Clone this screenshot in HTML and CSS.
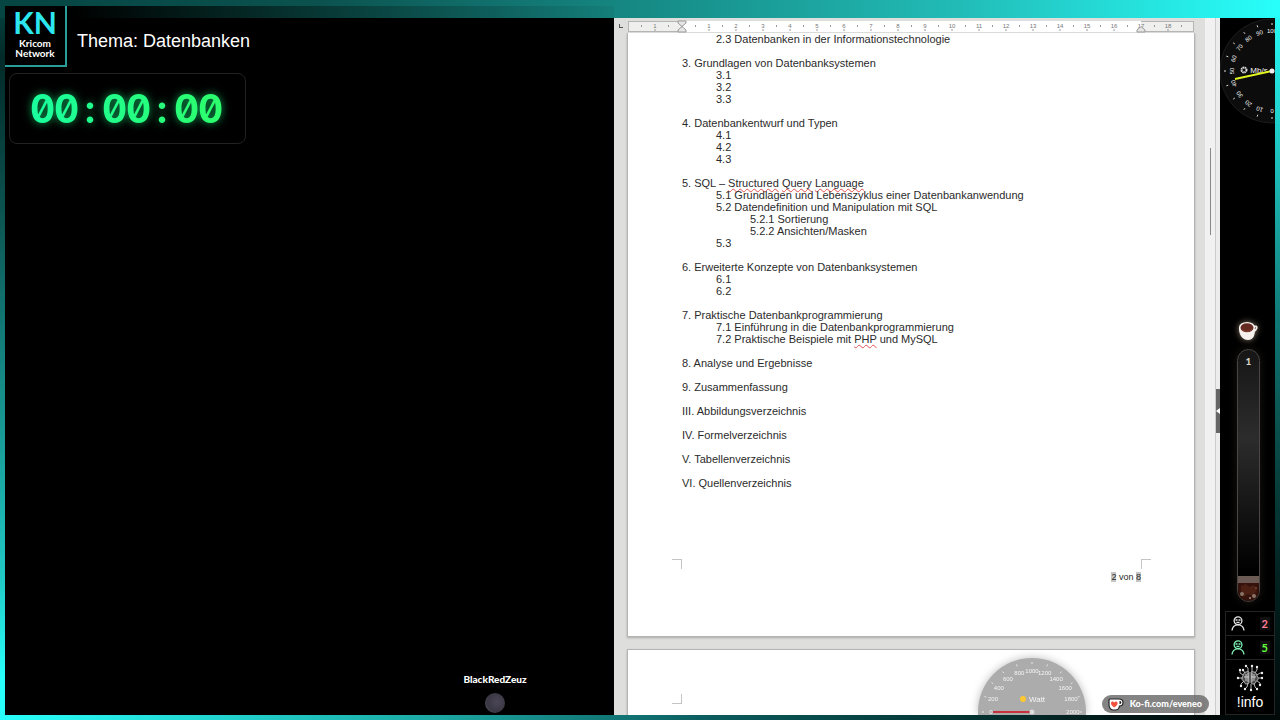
FILE: index.html
```
<!DOCTYPE html>
<html lang="de">
<head>
    <meta charset="UTF-8">
    <meta name="viewport" content="width=device-width, initial-scale=1.0">
    <title>Kricom Network - Datenbanken</title>
    <link rel="stylesheet" href="styles.css">
</head>
<body>

<div class="stage">
    <main class="camera">
        <header class="title-bar">
            <div class="logo">
                <span class="logo-short">KN</span>
                <span class="logo-name">Kricom<br>Network</span>
            </div>
            <h1>Thema: Datenbanken</h1>
        </header>
        <div class="timer">
            <div class="digits">
                <span>0</span><span>0</span><span>:</span><span>0</span><span>0</span><span>:</span><span>0</span><span>0</span>
            </div>
        </div>
        <div class="speaker">
            <span>BlackRedZeuz</span>
            <div class="avatar"></div>
        </div>
    </main>

    <section class="writer">
        <div class="desk">
            <div class="ruler">
                <span class="tab-stop"></span>
                <svg id="ruler" width="568" height="13" viewBox="0 0 568 13"></svg>
            </div>
            <article class="page">
                <ul class="toc">
                    <li>
                        <ul>
                            <li>2.3 Datenbanken in der Informationstechnologie</li>
                        </ul>
                    </li>
                    <li>3. Grundlagen von Datenbanksystemen
                        <ul>
                            <li>3.1</li>
                            <li>3.2</li>
                            <li>3.3</li>
                        </ul>
                    </li>
                    <li>4. Datenbankentwurf und Typen
                        <ul>
                            <li>4.1</li>
                            <li>4.2</li>
                            <li>4.3</li>
                        </ul>
                    </li>
                    <li>5. SQL – <span class="typo">Structured</span> <span class="typo">Query</span> <span class="typo">Language</span>
                        <ul>
                            <li>5.1 Grundlagen und Lebenszyklus einer Datenbankanwendung</li>
                            <li>5.2 Datendefinition und Manipulation mit SQL
                                <ul>
                                    <li>5.2.1 Sortierung</li>
                                    <li>5.2.2 Ansichten/Masken</li>
                                </ul>
                            </li>
                            <li>5.3</li>
                        </ul>
                    </li>
                    <li>6. Erweiterte Konzepte von Datenbanksystemen
                        <ul>
                            <li>6.1</li>
                            <li>6.2</li>
                        </ul>
                    </li>
                    <li>7. Praktische Datenbankprogrammierung
                        <ul>
                            <li>7.1 Einführung in die Datenbankprogrammierung</li>
                            <li>7.2 Praktische Beispiele mit <span class="typo">PHP</span> und MySQL</li>
                        </ul>
                    </li>
                    <li>8. Analyse und Ergebnisse</li>
                    <li>9. Zusammenfassung</li>
                    <li>III. Abbildungsverzeichnis</li>
                    <li>IV. Formelverzeichnis</li>
                    <li>V. Tabellenverzeichnis</li>
                    <li>VI. Quellenverzeichnis</li>
                </ul>
                <div class="crops">
                    <span class="crop crop-left"></span>
                    <span class="crop crop-right"></span>
                </div>
                <footer class="page-number"><span class="field">2</span> von <span class="field">8</span></footer>
            </article>
            <article class="page page-next">
                <div class="crops">
                    <span class="crop crop-top"></span>
                </div>
            </article>
        </div>
        <div class="scrollbar"><div class="thumb"></div></div>
        <div class="splitter"><button class="handle" aria-label="Seitenleiste">
            <svg width="4" height="6" viewBox="0 0 4 6"><path d="M4 0v6L0 3z" fill="#fff"/></svg>
        </button></div>

        <div class="overlay">
            <svg id="watt" class="watt" width="112" height="58" viewBox="-56 -55 112 58"></svg>
            <a class="kofi" href="https://ko-fi.com/eveneo">
                <svg width="16" height="13" viewBox="0 0 16 13">
                    <path d="M2 1h9c3 0 4 1.500 4 3.500S13.500 8 11.500 8c-.5 2.500-2 4-4 4h-2C3 12 1 10 1 7V2c0-.6.400-1 1-1z" fill="#fff" stroke="#222" stroke-width="1.200"/>
                    <path d="M11.500 3v3c1.300 0 1.800-.6 1.800-1.500S12.800 3 11.500 3z" fill="#222"/>
                    <path d="M6.300 9.500C4.500 8 3 7 3 5.300 3 3.300 5.300 3 6.300 4.500 7.300 3 9.600 3.300 9.600 5.300 9.600 7 8.100 8 6.300 9.500z" fill="#f0503c"/>
                </svg>
                Ko-fi.com/eveneo
            </a>
        </div>
    </section>

    <aside class="side">
        <svg id="speed" class="speed" width="55" height="110" viewBox="-52 -53 55 110"></svg>
        <svg class="cup" width="20" height="20" viewBox="0 0 20 20">
            <path d="M14.500 7c3-3 5-1.500 4 .5-.6 1.500-2 3-4.500 3.500" fill="none" stroke="#f1e9e4" stroke-width="1.800"/>
            <path d="M1 6c-.5 7 3 13 9 13 5 0 7-4 7-11z" fill="#f6f0ec"/>
            <ellipse cx="9" cy="6.500" rx="8" ry="5.500" fill="#fbf6f2"/>
            <ellipse cx="9" cy="6.800" rx="6.500" ry="4.500" fill="#64291f"/>
            <path d="M4 8.500c2 2.300 7 2.500 10 0" fill="none" stroke="#8d4635" stroke-width="1"/>
        </svg>
        <div class="tube">
            <span>1</span>
            <div class="coffee">
                <svg width="21" height="25" viewBox="0 0 21 25">
                    <path d="M0 0h21v7H0z" fill="#6b5b54"/>
                    <path d="M0 7h21v18H0z" fill="#35130c"/>
                    <path d="M3 10l5-2 3 3 5-2 3 5-4 6-5-2-4 3-3-5z" fill="#4d2014"/>
                    <circle cx="4" cy="18" r="2" fill="#8a7468"/>
                    <circle cx="16" cy="20" r="2" fill="#8a7468"/>
                    <circle cx="12" cy="22" r="1" fill="#a08c80"/>
                    <circle cx="18" cy="12" r="1" fill="#6f4b3d"/>
                </svg>
            </div>
        </div>
        <div class="counter">
            <svg width="14" height="15" viewBox="0 0 14 15" fill="none" stroke="#e6e6e6" stroke-width="1.300">
                <circle cx="7" cy="4.700" r="3.900"/>
                <path d="M4.500 4h2M7.500 4h2M5.500 6c1 .8 2 .8 3 0M1 14.500c.3-3.500 2-5.500 6-5.900 4 .4 5.700 2.400 6 5.900"/>
            </svg>
            <b class="count-red">2</b>
        </div>
        <div class="counter">
            <svg width="14" height="15" viewBox="0 0 14 15" fill="none" stroke="#7df0b4" stroke-width="1.300">
                <circle cx="7" cy="4.700" r="3.900"/>
                <path d="M4.500 4h2M7.500 4h2M5.500 6c1 .8 2 .8 3 0M1 14.500c.3-3.500 2-5.500 6-5.900 4 .4 5.700 2.400 6 5.900"/>
            </svg>
            <b class="count-green">5</b>
        </div>
        <div class="info">
            <svg width="28" height="28" viewBox="0 0 28 28" fill="none" stroke="#b4b4b4" stroke-width="1">
                <path d="M13 8c-3-1-6 1-6 4-2 2-1 5 1 5 0 3 3 4 5 2zM15 8c3-1 6 1 6 4 2 2 1 5-1 5 0 3-3 4-5 2z" fill="#4a4a4a"/>
                <path d="M10 10v7M12 9v9M16 9v9M18 10v7M8 13h5M15 13h5" stroke="#ccc"/>
                <path d="M12 8V4l-2-2M16 8V3M19 9l2-3V3M21 11l3-2h2M22 14h4M21 17l3 2v2M18 19l1 4 2 2M15 20v6M12 19l-1 4-2 2M8 17l-3 3v2M7 14H2M7 11L4 9V6M9 9L7 6"/>
                <g fill="#eee" stroke="none">
                    <circle cx="10" cy="2" r="1.200"/><circle cx="16" cy="2" r="1.200"/><circle cx="21" cy="3" r="1.200"/>
                    <circle cx="26" cy="9" r="1.200"/><circle cx="26" cy="14" r="1.200"/><circle cx="24" cy="21" r="1.200"/>
                    <circle cx="21" cy="25" r="1.200"/><circle cx="15" cy="26" r="1.200"/><circle cx="9" cy="25" r="1.200"/>
                    <circle cx="5" cy="22" r="1.200"/><circle cx="2" cy="14" r="1.200"/><circle cx="4" cy="6" r="1.200"/>
                    <circle cx="7" cy="6" r="1.200"/>
                </g>
            </svg>
            <span>!info</span>
        </div>
    </aside>
</div>

<script>
    // Lineal: 0 cm liegt am linken Seitenrand, 27px pro cm
    function drawRuler() {
        let out = '<rect x="1.5" y="1.5" width="565" height="10" fill="#efefee" stroke="#b5b5b5"/>';
        out += '<rect x="55" y="1" width="459" height="11" fill="#fff"/>';
        for (let i = -3; i <= 37; i++) {
            const x = 55 + i * 13.5;
            if (i % 2 === 0 && i !== 0) {
                out += `<text x="${x}" y="8">${Math.abs(i / 2)}</text><path d="M${x} 9v2"/>`;
            } else {
                out += `<path d="M${x} 5v2"/>`;
            }
        }
        out += '<path class="indent" d="M51 1h8v2l-4 3.500-4-3.500zM51 12h8v-2l-4-3.500-4 3.500zM510 12h8v-2l-4-3.500-4 3.500z"/>';
        document.getElementById('ruler').innerHTML = out;
    }

    // Punkt auf einem Kreis, 0 Grad zeigt nach oben
    function point(deg, r) {
        const rad = deg * Math.PI / 180;
        return [Math.sin(rad) * r, -Math.cos(rad) * r];
    }

    function drawSpeed() {
        let out = '<circle r="52" fill="#0c0c0c" stroke="#1c1c1c"/>';
        for (let i = 0; i <= 10; i++) {
            const deg = -90 + (i - 5) * 18;
            const [x, y] = point(deg, 40);
            const [x1, y1] = point(deg, 46);
            const [x2, y2] = point(deg, 48);
            out += `<path d="M${x1} ${y1}L${x2} ${y2}" stroke="#ddd"/>`;
            out += `<text transform="translate(${x} ${y}) rotate(${deg})" y="2">${i * 10}</text>`;
        }
        out += '<circle cx="-28" cy="-1" r="2.500" fill="none" stroke="#ddd" stroke-width="2" stroke-dasharray="1.500 .500"/>';
        out += '<text class="unit" x="-13" y="2">Mb/s</text>';
        out += '<path d="M-37 8L0 0" stroke="#e1f51e" stroke-width="2"/><circle r="2.500" fill="#eee"/>';
        document.getElementById('speed').innerHTML = out;
    }

    function drawWatt() {
        let out = '<circle r="54" fill="#acacac"/>';
        for (let i = 0; i <= 10; i++) {
            const deg = -90 + i * 18;
            const [x, y] = point(deg, 41);
            const [x1, y1] = point(deg, 48);
            const [x2, y2] = point(deg, 50);
            out += `<path d="M${x1} ${y1}L${x2} ${y2}" stroke="#e6e6e6"/>`;
            out += `<text x="${x}" y="${y + 2}">${i * 200}</text>`;
        }
        out += '<circle cx="-9" cy="-13" r="3" fill="#ffc832"/><text class="unit" x="5" y="-10">Watt</text>';
        out += '<path d="M-39 0H0" stroke="#c8323c" stroke-width="2"/><circle r="2.500" fill="#ddd"/>';
        document.getElementById('watt').innerHTML = out;
    }

    drawRuler();
    drawSpeed();
    drawWatt();
</script>

</body>
</html>
```

FILE: styles.css
```
* {
    box-sizing: border-box;
}
body {
    margin: 0;
    background: #000;
    color: #fff;
    font-family: "Liberation Sans", Arial, sans-serif;
}
ul {
    list-style: none;
    margin: 0;
    padding: 0;
}
/* glowing frame around everything */
.stage {
    display: grid;
    grid-template-columns: 609fr 606fr 55px;
    height: 100vh;
    padding: 6px 5px 5px;
    overflow: hidden;
    background:
        linear-gradient(90deg, #054542, #0b524f 25%, #168a85 50%, #22bcb7 75%, #28fffb) top / 100% 18px no-repeat,
        linear-gradient(90deg, #28fffb, #1ca8a3 34%, #0b5a5c 56%, #033533 75%, #010808 95%) bottom / 100% 5px no-repeat,
        linear-gradient(#054542, #022a28 8%, #0a4a47 25%, #20c8c4 80%, #28fffb 94%) left / 5px 100% no-repeat,
        linear-gradient(#28fffb, #1fc8c4 20%, #0f7a78 44%, #0a4f4c 60%, #022220 80%, #010808) right / 5px 100% no-repeat,
        #000;
}
.camera {
    display: flex;
    flex-direction: column;
    min-width: 0;
    background: linear-gradient(90deg, #000 11%, #021412 25%, #073532 50%, #0e5f5c 80%, #147f7a) top / 100% 12px no-repeat, #000;
}
.title-bar {
    display: flex;
    align-items: center;
    gap: 10px;
}
.logo {
    display: flex;
    flex-direction: column;
    align-items: center;
    width: 62px;
    height: 61px;
    background: #000;
    border-right: 2px solid #2a9d9a;
    border-bottom: 2px solid #2a9d9a;
    font-family: Lato, sans-serif;
    font-weight: bold;
    text-align: center;
}
.logo-short {
    color: #2ce6f0;
    font-size: 30px;
    line-height: 32px;
}
.logo-name {
    font-size: 10px;
    line-height: 10px;
}
h1 {
    margin: 10px 0 0;
    font-size: 18px;
    font-weight: normal;
}
.timer {
    align-self: flex-start;
    margin: 6px 0 0 4px;
    padding: 1px 23px 0 20px;
    border: 1px solid #222;
    border-radius: 8px;
    font-family: Inter, sans-serif;
    font-size: 39px;
    font-weight: 700;
    font-feature-settings: "zero", "tnum";
    line-height: 68px;
}
.digits {
    display: grid;
    grid-template-columns: repeat(8, 24px);
    text-align: center;
    background: linear-gradient(90deg, #1aff9e, #2dff6c);
    background-clip: text;
    -webkit-background-clip: text;
    color: transparent;
    filter: drop-shadow(0 0 4px #0c9a50);
}
.speaker {
    display: flex;
    flex-direction: column;
    align-items: center;
    gap: 8px;
    margin: auto 0 2px;
    padding-left: 371px;
    font-family: Lato, sans-serif;
    font-size: 10px;
    font-weight: 900;
    line-height: 12px;
}
.avatar {
    width: 20px;
    height: 20px;
    border-radius: 50%;
    background: radial-gradient(circle at 60% 45%, #4a4656, #3a3744 60%, #6a6672);
}

/* text document */
.writer {
    position: relative;
    display: flex;
    min-width: 0;
    margin-top: 12px;
    overflow: hidden;
    background: #dededc;
    color: #2b2b2b;
}
.desk {
    display: flex;
    flex-direction: column;
    flex: 1;
    min-width: 0;
    padding: 0 10px 0 13px;
}
.ruler {
    position: relative;
    height: 15px;
    padding-top: 2px;
}
.ruler svg {
    display: block;
}
.ruler text {
    fill: #777;
    font-size: 6px;
    text-anchor: middle;
}
.ruler path {
    stroke: #999;
}
.ruler .indent {
    fill: #e6e6e6;
}
.tab-stop {
    position: absolute;
    left: -8px;
    top: 6px;
    width: 4px;
    height: 4px;
    border-left: 1px solid #555;
    border-bottom: 1px solid #555;
}
.page {
    padding: 0 53px 53px 54px;
    background: #fff;
    border: 1px solid #b4b4b4;
    border-top: 0;
    box-shadow: 0 1px 2px #aaa;
}
.toc {
    font-size: 11px;
    line-height: 12px;
    padding-bottom: 70px;
}
.toc > li + li {
    margin-top: 12px;
}
.toc ul {
    padding-left: 34px;
}
.typo {
    text-decoration: underline wavy #e05050 1px;
    text-decoration-skip-ink: none;
    text-underline-offset: 1px;
}
.crops {
    display: flex;
    justify-content: space-between;
    margin: 0 -10px;
}
.crop {
    width: 10px;
    height: 10px;
    border: 0 solid #c4c4c4;
}
.crop-left {
    border-top-width: 1px;
    border-right-width: 1px;
}
.crop-right {
    border-top-width: 1px;
    border-left-width: 1px;
}
.crop-top {
    border-bottom-width: 1px;
    border-right-width: 1px;
}
.page-number {
    padding-top: 3px;
    font-size: 9px;
    line-height: 11px;
    text-align: right;
}
.field {
    background: #c6c6c6;
}
.page-next {
    flex: 1;
    margin-top: 12px;
    padding-top: 44px;
    border-top: 1px solid #b4b4b4;
}
.scrollbar {
    width: 10px;
    padding: 130px 4px 0 5px;
    background: #f1f1f1;
}
.thumb {
    height: 87px;
    background: #888;
}
.splitter {
    display: flex;
    width: 5px;
    padding-top: 88px;
    align-items: center;
    background: #ececec;
    border-left: 1px solid #ccc;
}
.handle {
    width: 4px;
    height: 44px;
    padding: 0;
    border: 0;
    background: #666;
    cursor: pointer;
}
.handle svg {
    display: block;
}
.overlay {
    position: absolute;
    right: 11px;
    bottom: 0;
    display: flex;
    align-items: flex-end;
    gap: 14px;
}
.watt {
    filter: drop-shadow(0 0 4px #bbb);
}
.watt text,
.speed text {
    fill: #f4f4f4;
    font-size: 6px;
    text-anchor: middle;
}
.watt .unit,
.speed .unit {
    font-size: 8px;
}
.kofi {
    display: flex;
    align-items: center;
    gap: 6px;
    margin-bottom: 2px;
    padding: 0 7px 0 6px;
    border-radius: 10px;
    background: rgba(110, 110, 110, 0.85);
    color: #fff;
    font-family: Lato, sans-serif;
    font-size: 9px;
    font-weight: 900;
    line-height: 18px;
    text-decoration: none;
}

/* right column widgets */
.side {
    display: flex;
    flex-direction: column;
    align-items: center;
    margin-top: 12px;
    background: #000;
}
.cup {
    margin-top: auto;
    filter: drop-shadow(0 0 3px #8a7a66);
}
.tube {
    display: flex;
    flex-direction: column;
    align-items: center;
    justify-content: space-between;
    width: 23px;
    height: 253px;
    margin: 8px 0 9px 2px;
    padding-top: 4px;
    overflow: hidden;
    border: 1px solid #4a4644;
    border-radius: 12px;
    background: linear-gradient(#161616, #2c2c2c 35%, #000 88%);
    box-shadow: 0 0 8px #1c1814;
    color: #d8d0c4;
    font-family: Lato, sans-serif;
    font-size: 10px;
    font-weight: 900;
    line-height: 14px;
}
.coffee svg {
    display: block;
}
.counter,
.info {
    align-self: stretch;
    margin-left: 5px;
    border: 1px solid #242424;
}
.counter {
    display: flex;
    align-items: center;
    justify-content: space-between;
    height: 24px;
    padding: 0 4px 0 5px;
    border-bottom: 0;
    font-family: Lato, sans-serif;
    font-size: 11px;
}
.counter b {
    padding: 0 2px;
    background: #111;
}
.count-red {
    color: #ff7d96;
}
.count-green {
    color: #62ff3c;
}
.info {
    display: flex;
    flex-direction: column;
    align-items: center;
    padding: 4px 0 2px;
    font-size: 14px;
    line-height: 20px;
}
```
